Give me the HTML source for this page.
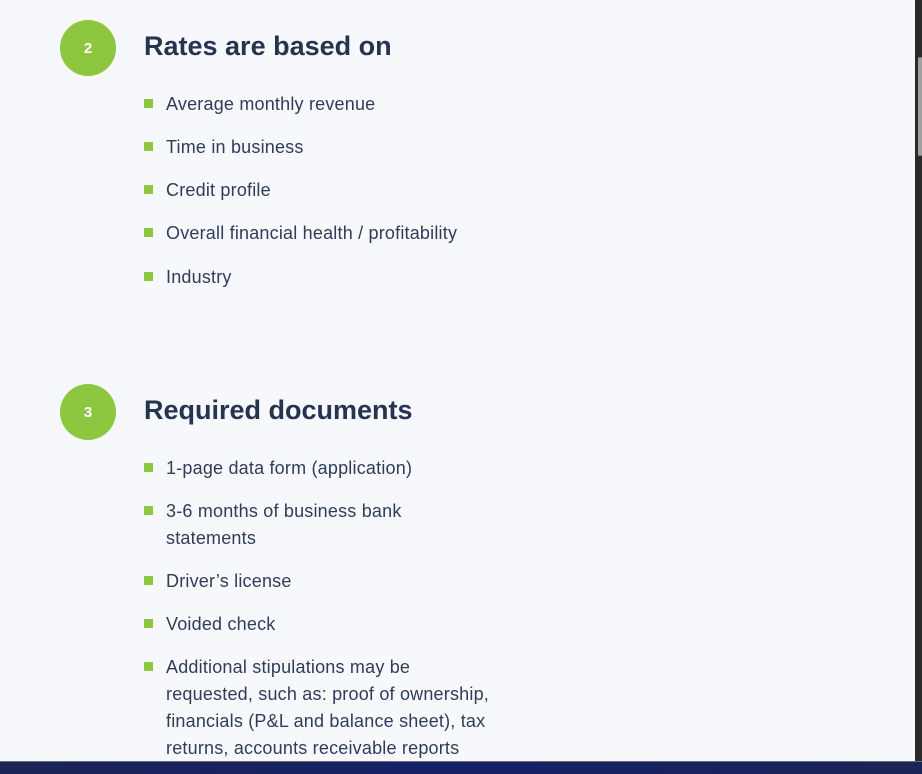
<!DOCTYPE html>
<html><head><style>
*{margin:0;padding:0;box-sizing:border-box}
body{width:922px;height:774px;overflow:hidden;background:#f7f8fc;font-family:"Liberation Sans",Arial,sans-serif;position:relative;color:#2b3a55}
.c{position:absolute;left:60px;width:56px;height:56px;border-radius:50%;background:#8dc63f;color:#fff;font-weight:bold;font-size:15px;display:flex;align-items:center;justify-content:center}
h2{position:absolute;left:144px;font-size:27px;font-weight:bold;color:#26344f}
.li{position:absolute;left:166px;font-size:18px;letter-spacing:0.2px;line-height:27px;width:340px;color:#2f3d58;margin-top:1px}
.li:before{content:"";position:absolute;left:-22px;top:8px;width:9px;height:9px;background:#8dc63f}
.sb{position:absolute;left:915px;top:0;width:7px;height:762px;background:#2a2a2a}
.th{position:absolute;left:918px;top:57px;width:4px;height:99px;background:#a0a0a0;border-radius:2px}
.tb{position:absolute;left:0;top:761px;width:922px;height:13px;background:linear-gradient(90deg,#1a2456,#142066 50%,#1a2456);border-top:1px solid #6a6a7a}
</style></head><body>
<div class="c" style="top:20px">2</div>
<h2 style="top:31px">Rates are based on</h2>
<div class="li" style="top:90px">Average monthly revenue</div>
<div class="li" style="top:133px">Time in business</div>
<div class="li" style="top:176px">Credit profile</div>
<div class="li" style="top:219px">Overall financial health / profitability</div>
<div class="li" style="top:263px">Industry</div>
<div class="c" style="top:384px">3</div>
<h2 style="top:395px">Required documents</h2>
<div class="li" style="top:454px">1-page data form (application)</div>
<div class="li" style="top:497px;width:300px">3-6 months of business bank statements</div>
<div class="li" style="top:567px">Driver’s license</div>
<div class="li" style="top:610px">Voided check</div>
<div class="li" style="top:653px;width:332px">Additional stipulations may be requested, such as: proof of ownership, financials (P&amp;L and balance sheet), tax returns, accounts receivable reports</div>
<div class="sb"></div><div class="th"></div>
<div class="tb"></div>
</body></html>
